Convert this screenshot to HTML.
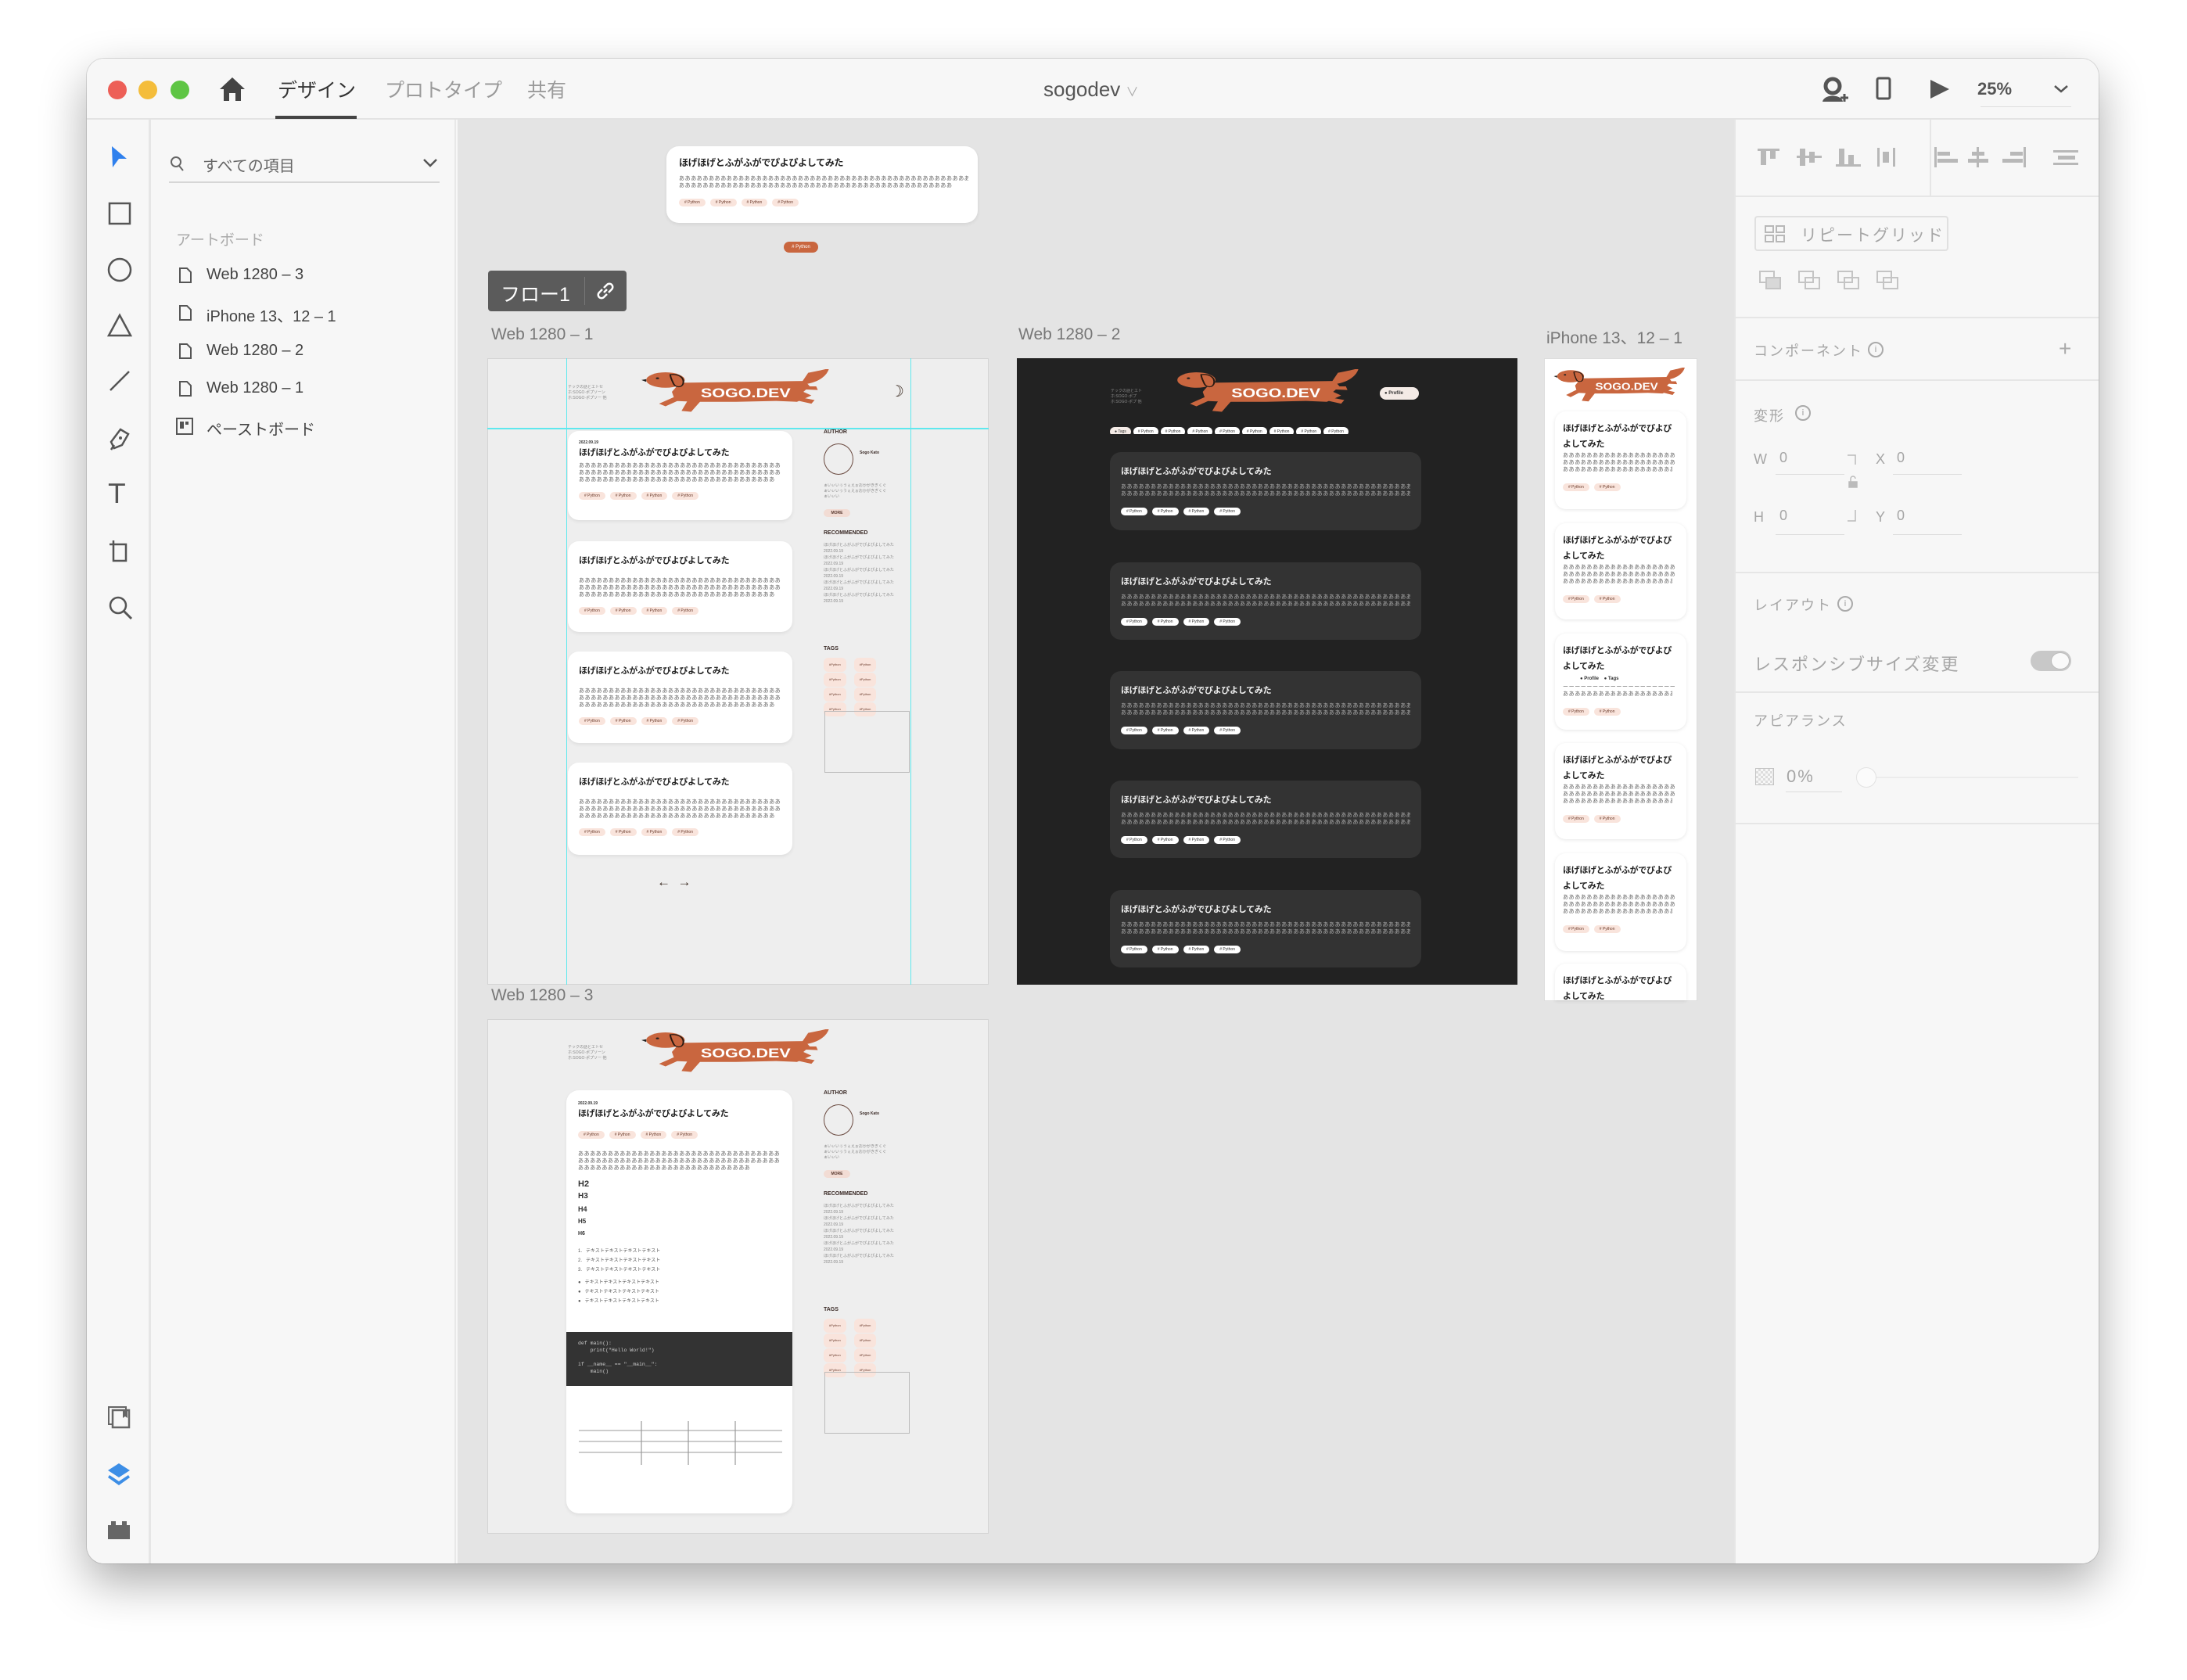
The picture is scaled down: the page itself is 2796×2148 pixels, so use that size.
<!DOCTYPE html>
<html><head><meta charset="utf-8">
<style>
*{box-sizing:border-box;margin:0;padding:0}
body{width:2796px;height:2148px;background:#fff;position:relative;overflow:hidden;font-family:"Liberation Sans","Noto Sans CJK JP",sans-serif}
.a{position:absolute}
#win{left:111px;top:75px;width:2572px;height:1924px;border-radius:22px;background:#f7f7f7;box-shadow:0 24px 60px rgba(0,0,0,.33),0 0 0 1px rgba(0,0,0,.12);overflow:hidden}
.tl{width:24px;height:24px;border-radius:50%;top:103px}
.tab{top:96px;font-size:25px;color:#9a9a9a}
.lay{font-size:20px;color:#444}
.pl{font-size:18px;color:#a6a6a6;letter-spacing:2px}
.div{height:2px;background:#e6e6e6;left:2217px;width:466px}
.ab{position:absolute;overflow:hidden}
.card{position:absolute;background:#fff;border-radius:14px;box-shadow:0 2px 5px rgba(0,0,0,.07);padding:12px 14px;overflow:hidden}
.dt{font-size:5px;font-weight:bold;color:#333;height:7px}
.tt{font-size:11px;font-weight:bold;color:#222;white-space:nowrap;letter-spacing:-.3px}
.ln{font-size:7px;line-height:9px;color:#666;white-space:nowrap;overflow:hidden;letter-spacing:.6px}
.tg{display:inline-block;background:#f9e4dc;border-radius:6px;font-size:5px;padding:2px 7px;margin-right:6px;color:#6a3a2a}
.dk{background:#333;box-shadow:none}
.dk .tt{color:#eee}.dk .ln{color:#aaa}.dk .tg{background:#fff;color:#333}
.sb{font-size:7px;font-weight:bold;color:#3a2a26}
.sl{font-size:5px;color:#888;white-space:nowrap;overflow:hidden;line-height:7px}
.lbl{font-size:21px;color:#777}
.ip .tt{font-size:11px;white-space:normal;line-height:20px;word-break:break-all}
</style></head><body>
<svg width="0" height="0" style="position:absolute">
<defs>
<symbol id="dog" viewBox="0 0 240 100">
<path d="M210 8 C222 4 232 0 236 -2 C234 12 226 26 210 32 L200 34 Z" fill="#c9663f"/>
<path d="M50 30 L206 26 L212 38 L204 50 L214 58 L204 66 L196 72 L170 70 L120 72 L70 72 L44 70 L40 50 Z" fill="#c9663f"/>
<path d="M60 68 L52 92 L64 94 L76 70 Z M188 66 L214 76 L218 68 L200 62 Z M196 44 L222 46 L220 38 L200 38 Z M42 62 L24 76 L32 82 L52 66 Z" fill="#c9663f"/>
<ellipse cx="32" cy="24" rx="24" ry="17" fill="#c9663f"/>
<path d="M8 22 L2 24 L8 28 Z" fill="#222"/>
<path d="M38 12 C48 10 56 18 54 32 C52 42 44 40 42 32 C40 24 38 18 38 12Z" fill="#c9663f" stroke="#2a1a12" stroke-width="2"/>
<circle cx="22" cy="20" r="2" fill="#222"/>
</symbol>
</defs></svg>

<div id="win" class="a"></div>
<div class="a" style="left:111px;top:75px;width:2572px;height:78px;background:#f7f7f7;border-radius:22px 22px 0 0;border-bottom:2px solid #e3e3e3"></div>
<div class="a tl" style="left:138px;background:#ed5f57"></div>
<div class="a tl" style="left:177px;background:#f4bd3b"></div>
<div class="a tl" style="left:218px;background:#5ec544"></div>
<svg class="a" style="left:280px;top:98px" width="34" height="32" viewBox="0 0 34 32"><path d="M17 1 L33 16 L28 16 L28 31 L21 31 L21 21 L13 21 L13 31 L6 31 L6 16 L1 16 Z" fill="#444"/></svg>
<div class="a tab" style="left:355px;color:#333">デザイン</div>
<div class="a" style="left:352px;top:148px;width:104px;height:4px;background:#444"></div>
<div class="a tab" style="left:492px">プロトタイプ</div>
<div class="a tab" style="left:674px">共有</div>
<div class="a" style="left:1334px;top:99px;font-size:26px;color:#555">sogodev <span style="font-size:16px;color:#aaa">∨</span></div>
<svg class="a" style="left:2328px;top:98px" width="36" height="34" viewBox="0 0 36 34"><circle cx="15" cy="12" r="9" fill="none" stroke="#555" stroke-width="5"/><path d="M2 32 C4 22 26 22 28 32" fill="#555"/><path d="M30 22 V32 M25 27 H35" stroke="#555" stroke-width="3"/></svg>
<svg class="a" style="left:2398px;top:98px" width="20" height="30" viewBox="0 0 20 30"><rect x="2" y="2" width="16" height="26" rx="2" fill="none" stroke="#555" stroke-width="3"/></svg>
<svg class="a" style="left:2466px;top:101px" width="28" height="26" viewBox="0 0 28 26"><path d="M2 1 L26 13 L2 25 Z" fill="#555"/></svg>
<div class="a" style="left:2528px;top:101px;font-size:22px;font-weight:bold;color:#555">25%</div>
<div class="a" style="left:2532px;top:136px;width:116px;height:1px;background:#ddd"></div>
<svg class="a" style="left:2625px;top:108px" width="20" height="12" viewBox="0 0 20 12"><path d="M2 2 L10 9 L18 2" fill="none" stroke="#555" stroke-width="2.5"/></svg>

<div class="a" style="left:111px;top:153px;width:82px;height:1846px;background:#f7f7f7;border-right:3px solid #e6e6e6;border-radius:0 0 0 22px"></div>
<svg class="a" style="left:140px;top:186px" width="24" height="30" viewBox="0 0 24 30"><path d="M3 1 L22 17 L12 17 L4 28 Z" fill="#2f80ed"/></svg>
<svg class="a" style="left:137px;top:257px" width="32" height="32"><rect x="3" y="3" width="26" height="26" fill="none" stroke="#555" stroke-width="2.5"/></svg>
<svg class="a" style="left:136px;top:328px" width="34" height="34"><circle cx="17" cy="17" r="14" fill="none" stroke="#555" stroke-width="2.5"/></svg>
<svg class="a" style="left:136px;top:400px" width="34" height="32"><path d="M17 3 L31 29 L3 29 Z" fill="none" stroke="#555" stroke-width="2.5"/></svg>
<svg class="a" style="left:138px;top:472px" width="30" height="30"><path d="M27 3 L3 27" stroke="#555" stroke-width="2.5"/></svg>
<svg class="a" style="left:138px;top:545px" width="30" height="32" viewBox="0 0 30 32"><path d="M8 28 L4 20 L16 4 L26 10 L18 24 Z M4 30 L8 24" fill="none" stroke="#555" stroke-width="2.5"/><circle cx="16" cy="15" r="2" fill="#555"/></svg>
<div class="a" style="left:139px;top:612px;font-size:34px;font-family:'DejaVu Sans';color:#555">T</div>
<svg class="a" style="left:137px;top:688px" width="32" height="32"><path d="M8 3 V8 H3 M8 8 H24 V29 H8 V8" fill="none" stroke="#555" stroke-width="2.5"/></svg>
<svg class="a" style="left:137px;top:760px" width="34" height="34"><circle cx="14" cy="14" r="10" fill="none" stroke="#555" stroke-width="2.5"/><path d="M21 21 L31 31" stroke="#555" stroke-width="3"/></svg>
<svg class="a" style="left:136px;top:1796px" width="32" height="32"><rect x="3" y="3" width="22" height="22" fill="none" stroke="#666" stroke-width="2"/><rect x="8" y="7" width="21" height="22" fill="#f7f7f7" stroke="#666" stroke-width="2.5"/><path d="M21 7 V17 L24 15 L27 17 V7Z" fill="#666"/></svg>
<svg class="a" style="left:136px;top:1869px" width="32" height="32"><path d="M16 2 L30 11 L16 20 L2 11 Z" fill="#3d8ee6"/><path d="M4 17 L16 25 L28 17 L30 20 L16 30 L2 20 Z" fill="#3d8ee6"/></svg>
<svg class="a" style="left:136px;top:1942px" width="32" height="28"><path d="M2 8 H6 V3 H12 V8 H20 V3 H26 V8 H30 V26 H2 Z" fill="#666"/></svg>

<div class="a" style="left:196px;top:153px;width:387px;height:1846px;background:#f7f7f7;border-right:2px solid #e8e8e8"></div>
<svg class="a" style="left:217px;top:199px" width="20" height="22"><circle cx="8" cy="8" r="6" fill="none" stroke="#666" stroke-width="2"/><path d="M12 13 L17 19" stroke="#666" stroke-width="2"/></svg>
<div class="a" style="left:259px;top:196px;font-size:20px;color:#666">すべての項目</div>
<svg class="a" style="left:540px;top:202px" width="20" height="14"><path d="M2 2 L10 10 L18 2" fill="none" stroke="#555" stroke-width="2.5"/></svg>
<div class="a" style="left:216px;top:232px;width:346px;height:2px;background:#d6d6d6"></div>
<div class="a" style="left:225px;top:292px;font-size:19px;color:#aaa">アートボード</div>
<svg class="a" style="left:228px;top:341px" width="18" height="22"><path d="M2 2 H11 L16 7 V20 H2 Z" fill="none" stroke="#555" stroke-width="2"/></svg>
<div class="a lay" style="left:264px;top:340px">Web 1280 – 3</div>
<svg class="a" style="left:228px;top:389px" width="18" height="22"><path d="M2 2 H11 L16 7 V20 H2 Z" fill="none" stroke="#555" stroke-width="2"/></svg>
<div class="a lay" style="left:264px;top:388px">iPhone 13、12 – 1</div>
<svg class="a" style="left:228px;top:438px" width="18" height="22"><path d="M2 2 H11 L16 7 V20 H2 Z" fill="none" stroke="#555" stroke-width="2"/></svg>
<div class="a lay" style="left:264px;top:437px">Web 1280 – 2</div>
<svg class="a" style="left:228px;top:486px" width="18" height="22"><path d="M2 2 H11 L16 7 V20 H2 Z" fill="none" stroke="#555" stroke-width="2"/></svg>
<div class="a lay" style="left:264px;top:485px">Web 1280 – 1</div>
<svg class="a" style="left:224px;top:533px" width="24" height="24"><rect x="2" y="2" width="20" height="20" fill="none" stroke="#555" stroke-width="2"/><rect x="6" y="6" width="5" height="9" fill="#555"/><rect x="13" y="6" width="4" height="4" fill="#555"/></svg>
<div class="a lay" style="left:264px;top:533px">ペーストボード</div>

<div class="a" style="left:585px;top:153px;width:1632px;height:1846px;background:#e4e4e4"></div>

<div class="card" style="left:852px;top:187px;width:398px;height:98px;padding:12px 16px;border-radius:16px">
<div class="tt" style="font-size:12px">ほげほげとふがふがでぴよぴよしてみた</div>
<div class="ln" style="margin-top:8px;width:370px">ああああああああああああああああああああああああああああああああああああああああああああああああああああ</div>
<div class="ln" style="width:350px">ああああああああああああああああああああああああああああああああああああああああああああああああああああ</div>
<div style="margin-top:5px"><span class="tg"># Python</span><span class="tg"># Python</span><span class="tg"># Python</span><span class="tg"># Python</span></div>
</div>
<div class="a" style="left:1002px;top:309px;width:44px;height:14px;border-radius:7px;background:#c9663f;font-size:6px;color:#fff;text-align:center;line-height:14px"># Python</div>

<div class="a" style="left:624px;top:346px;width:177px;height:52px;background:#5b5b5b;border-radius:4px"></div>
<div class="a" style="left:640px;top:357px;font-size:25px;color:#fff">フロー1</div>
<div class="a" style="left:747px;top:354px;width:1px;height:36px;background:#777"></div>
<svg class="a" style="left:760px;top:358px" width="28" height="28" viewBox="0 0 28 28"><path d="M12 16 L16 12 M10 12 L6 16 A4 4 0 0 0 12 22 L16 18 M18 16 L22 12 A4 4 0 0 0 16 6 L12 10" fill="none" stroke="#fff" stroke-width="2.5"/></svg>

<div class="a lbl" style="left:628px;top:416px">Web 1280 – 1</div>
<div class="a lbl" style="left:1302px;top:416px">Web 1280 – 2</div>
<div class="a lbl" style="left:1977px;top:416px">iPhone 13、12 – 1</div>
<div class="a lbl" style="left:628px;top:1261px">Web 1280 – 3</div>

<!-- Artboard 1 -->
<div class="ab" style="left:623px;top:458px;width:641px;height:801px;background:#eeeeee;border:1px solid #d4d4d4"></div>
<div class="a sl" style="left:726px;top:492px;width:50px">テックの話とエトセ<br>ホ:SOGO·ポプソーン<br>ホ:SOGO·ポプソー 他社</div>
<svg class="a" style="left:818px;top:472px" width="246" height="58" viewBox="0 0 240 100" preserveAspectRatio="none"><use href="#dog"/><text x="132" y="62" font-size="28" font-weight="bold" fill="#fff" text-anchor="middle" textLength="112" lengthAdjust="spacingAndGlyphs" font-family="Liberation Sans">SOGO.DEV</text></svg>
<div class="a" style="left:1138px;top:488px;font-size:20px;color:#3a2a20">☽</div>
<div class="card" style="left:726px;top:551px;width:287px;height:114px">
<div class="dt">2022.09.19</div><div class="tt">ほげほげとふがふがでぴよぴよしてみた</div>
<div class="ln" style="margin-top:5px">ああああああああああああああああああああああああああああああああああああ</div><div class="ln">ああああああああああああああああああああああああああああああああああああ</div><div class="ln" style="width:250px">ああああああああああああああああああああああああああああああああああああ</div>
<div style="margin-top:4px"><span class="tg"># Python</span><span class="tg"># Python</span><span class="tg"># Python</span><span class="tg"># Python</span></div></div>
<div class="card" style="left:726px;top:692px;width:287px;height:116px;padding-top:16px">
<div class="tt">ほげほげとふがふがでぴよぴよしてみた</div>
<div class="ln" style="margin-top:14px">ああああああああああああああああああああああああああああああああああああ</div><div class="ln">ああああああああああああああああああああああああああああああああああああ</div><div class="ln" style="width:250px">ああああああああああああああああああああああああああああああああああああ</div>
<div style="margin-top:4px"><span class="tg"># Python</span><span class="tg"># Python</span><span class="tg"># Python</span><span class="tg"># Python</span></div></div>
<div class="card" style="left:726px;top:833px;width:287px;height:117px;padding-top:16px">
<div class="tt">ほげほげとふがふがでぴよぴよしてみた</div>
<div class="ln" style="margin-top:14px">ああああああああああああああああああああああああああああああああああああ</div><div class="ln">ああああああああああああああああああああああああああああああああああああ</div><div class="ln" style="width:250px">ああああああああああああああああああああああああああああああああああああ</div>
<div style="margin-top:4px"><span class="tg"># Python</span><span class="tg"># Python</span><span class="tg"># Python</span><span class="tg"># Python</span></div></div>
<div class="card" style="left:726px;top:975px;width:287px;height:118px;padding-top:16px">
<div class="tt">ほげほげとふがふがでぴよぴよしてみた</div>
<div class="ln" style="margin-top:14px">ああああああああああああああああああああああああああああああああああああ</div><div class="ln">ああああああああああああああああああああああああああああああああああああ</div><div class="ln" style="width:250px">ああああああああああああああああああああああああああああああああああああ</div>
<div style="margin-top:4px"><span class="tg"># Python</span><span class="tg"># Python</span><span class="tg"># Python</span><span class="tg"># Python</span></div></div>
<div class="a" style="left:840px;top:1118px;font-size:17px;font-weight:bold;color:#3a2a20">←&nbsp;&nbsp;→</div>
<div class="a sb" style="left:1053px;top:549px">AUTHOR</div>
<div class="a" style="left:1053px;top:567px;width:38px;height:40px;border-radius:50%;border:1.5px solid #6a4a40"></div>
<div class="a sb" style="left:1099px;top:576px;font-size:5px">Sogo Kato</div>
<div class="a sl" style="left:1053px;top:618px;width:108px">ぁいぃいぅうぇえぉおかがきぎくぐ<br>ぁいぃいぅうぇえぉおかがきぎくぐ<br>ぁいぃい</div>
<div class="a" style="left:1053px;top:651px;width:34px;height:10px;border-radius:5px;background:#f2dcd4;font-size:5px;font-weight:bold;text-align:center;line-height:10px;color:#5a3a30">MORE</div>
<div class="a sb" style="left:1053px;top:678px">RECOMMENDED</div>
<div class="a sl" style="left:1053px;top:693px;width:108px;line-height:8px">ほげほげとふがふがでぴよぴよしてみた<br>2022.09.19<br>ほげほげとふがふがでぴよぴよしてみた<br>2022.09.19<br>ほげほげとふがふがでぴよぴよしてみた<br>2022.09.19<br>ほげほげとふがふがでぴよぴよしてみた<br>2022.09.19<br>ほげほげとふがふがでぴよぴよしてみた<br>2022.09.19</div>
<div class="a sb" style="left:1053px;top:826px">TAGS</div>
<div class="a" style="left:1053px;top:840px;width:100px;line-height:14px"><span class="tg" style="font-size:4px;margin-right:10px">#Python</span><span class="tg" style="font-size:4px">#Python</span><br><span class="tg" style="font-size:4px;margin-right:10px">#Python</span><span class="tg" style="font-size:4px">#Python</span><br><span class="tg" style="font-size:4px;margin-right:10px">#Python</span><span class="tg" style="font-size:4px">#Python</span><br><span class="tg" style="font-size:4px;margin-right:10px">#Python</span><span class="tg" style="font-size:4px">#Python</span></div>
<div class="a" style="left:1054px;top:909px;width:109px;height:79px;border:1px solid #bbb"></div>
<div class="a" style="left:724px;top:458px;width:1px;height:801px;background:#5fe8ee"></div>
<div class="a" style="left:1164px;top:458px;width:1px;height:801px;background:#5fe8ee"></div>
<div class="a" style="left:623px;top:547px;width:641px;height:2px;background:#5fe8ee"></div>

<!-- Artboard 2 dark -->
<div class="ab" style="left:1300px;top:458px;width:640px;height:801px;background:#222"></div>
<div class="a sl" style="left:1420px;top:497px;width:40px;color:#888">テックの話とエトセ<br>ホ:SOGO·ポプ<br>ホ:SOGO·ポプ 他社</div>
<svg class="a" style="left:1497px;top:472px" width="244" height="58" viewBox="0 0 240 100" preserveAspectRatio="none"><use href="#dog"/><text x="132" y="62" font-size="28" font-weight="bold" fill="#fff" text-anchor="middle" textLength="112" lengthAdjust="spacingAndGlyphs" font-family="Liberation Sans">SOGO.DEV</text></svg>
<div class="a" style="left:1764px;top:495px;width:50px;height:16px;border-radius:8px;background:#f4ebe6;font-size:6px;font-weight:bold;line-height:16px;padding-left:6px;color:#333">● Profile</div>
<div class="a" style="left:1419px;top:540px;width:396px;height:15px;white-space:nowrap;overflow:hidden"><span class="tg" style="background:#f4ebe6;color:#333;border-radius:8px;margin-right:3px;padding:3px 6px">● Tags</span><span class="tg" style="background:#fff;color:#333;margin-right:3px;padding:3px 6px"># Python</span><span class="tg" style="background:#fff;color:#333;margin-right:3px;padding:3px 6px"># Python</span><span class="tg" style="background:#fff;color:#333;margin-right:3px;padding:3px 6px"># Python</span><span class="tg" style="background:#fff;color:#333;margin-right:3px;padding:3px 6px"># Python</span><span class="tg" style="background:#fff;color:#333;margin-right:3px;padding:3px 6px"># Python</span><span class="tg" style="background:#fff;color:#333;margin-right:3px;padding:3px 6px"># Python</span><span class="tg" style="background:#fff;color:#333;margin-right:3px;padding:3px 6px"># Python</span><span class="tg" style="background:#fff;color:#333;padding:3px 6px"># Python</span></div>
<div class="card dk" style="left:1419px;top:578px;width:398px;height:100px;padding:16px 14px">
<div class="tt">ほげほげとふがふがでぴよぴよしてみた</div>
<div class="ln" style="margin-top:8px">あああああああああああああああああああああああああああああああああああああああああああああああああああああ</div><div class="ln" style="width:370px">あああああああああああああああああああああああああああああああああああああああああああああああああああああ</div>
<div style="margin-top:6px"><span class="tg"># Python</span><span class="tg"># Python</span><span class="tg"># Python</span><span class="tg"># Python</span></div></div>
<div class="card dk" style="left:1419px;top:719px;width:398px;height:99px;padding:16px 14px">
<div class="tt">ほげほげとふがふがでぴよぴよしてみた</div>
<div class="ln" style="margin-top:8px">あああああああああああああああああああああああああああああああああああああああああああああああああああああ</div><div class="ln" style="width:370px">あああああああああああああああああああああああああああああああああああああああああああああああああああああ</div>
<div style="margin-top:6px"><span class="tg"># Python</span><span class="tg"># Python</span><span class="tg"># Python</span><span class="tg"># Python</span></div></div>
<div class="card dk" style="left:1419px;top:858px;width:398px;height:100px;padding:16px 14px">
<div class="tt">ほげほげとふがふがでぴよぴよしてみた</div>
<div class="ln" style="margin-top:8px">あああああああああああああああああああああああああああああああああああああああああああああああああああああ</div><div class="ln" style="width:370px">あああああああああああああああああああああああああああああああああああああああああああああああああああああ</div>
<div style="margin-top:6px"><span class="tg"># Python</span><span class="tg"># Python</span><span class="tg"># Python</span><span class="tg"># Python</span></div></div>
<div class="card dk" style="left:1419px;top:998px;width:398px;height:99px;padding:16px 14px">
<div class="tt">ほげほげとふがふがでぴよぴよしてみた</div>
<div class="ln" style="margin-top:8px">あああああああああああああああああああああああああああああああああああああああああああああああああああああ</div><div class="ln" style="width:370px">あああああああああああああああああああああああああああああああああああああああああああああああああああああ</div>
<div style="margin-top:6px"><span class="tg"># Python</span><span class="tg"># Python</span><span class="tg"># Python</span><span class="tg"># Python</span></div></div>
<div class="card dk" style="left:1419px;top:1138px;width:398px;height:99px;padding:16px 14px">
<div class="tt">ほげほげとふがふがでぴよぴよしてみた</div>
<div class="ln" style="margin-top:8px">あああああああああああああああああああああああああああああああああああああああああああああああああああああ</div><div class="ln" style="width:370px">あああああああああああああああああああああああああああああああああああああああああああああああああああああ</div>
<div style="margin-top:6px"><span class="tg"># Python</span><span class="tg"># Python</span><span class="tg"># Python</span><span class="tg"># Python</span></div></div>

<!-- iPhone -->
<div class="ab" style="left:1974px;top:458px;width:196px;height:822px;background:#fff;border:1px solid #ddd"></div>
<svg class="a" style="left:1985px;top:470px" width="172" height="46" viewBox="0 0 240 100" preserveAspectRatio="none"><use href="#dog"/><text x="132" y="62" font-size="28" font-weight="bold" fill="#fff" text-anchor="middle" textLength="112" lengthAdjust="spacingAndGlyphs" font-family="Liberation Sans">SOGO.DEV</text></svg>
<div class="card ip" style="left:1988px;top:526px;width:168px;height:125px;padding:12px 10px;box-shadow:0 1px 5px rgba(0,0,0,.1)"><div class="tt">ほげほげとふがふがでぴよぴよしてみた</div><div class="ln">あああああああああああああああああああ</div><div class="ln">あああああああああああああああああああ</div><div class="ln" style="width:140px">あああああああああああああああああああ</div><div style="margin-top:6px"><span class="tg"># Python</span><span class="tg"># Python</span></div></div>
<div class="card ip" style="left:1988px;top:669px;width:168px;height:123px;padding:12px 10px;box-shadow:0 1px 5px rgba(0,0,0,.1)"><div class="tt">ほげほげとふがふがでぴよぴよしてみた</div><div class="ln">あああああああああああああああああああ</div><div class="ln">あああああああああああああああああああ</div><div class="ln" style="width:140px">あああああああああああああああああああ</div><div style="margin-top:6px"><span class="tg"># Python</span><span class="tg"># Python</span></div></div>
<div class="card ip" style="left:1988px;top:810px;width:168px;height:123px;padding:12px 10px;box-shadow:0 1px 5px rgba(0,0,0,.1)"><div class="tt">ほげほげとふがふがでぴよぴよしてみた</div><div style="font-size:6px;font-weight:bold;color:#333;margin-left:22px;line-height:12px">● Profile &nbsp;&nbsp; ● Tags</div><div class="ln">ーーーーーーーーーーーーーーーーーーー</div><div class="ln" style="width:140px">あああああああああああああああああああ</div><div style="margin-top:6px"><span class="tg"># Python</span><span class="tg"># Python</span></div></div>
<div class="card ip" style="left:1988px;top:950px;width:168px;height:123px;padding:12px 10px;box-shadow:0 1px 5px rgba(0,0,0,.1)"><div class="tt">ほげほげとふがふがでぴよぴよしてみた</div><div class="ln">あああああああああああああああああああ</div><div class="ln">あああああああああああああああああああ</div><div class="ln" style="width:140px">あああああああああああああああああああ</div><div style="margin-top:6px"><span class="tg"># Python</span><span class="tg"># Python</span></div></div>
<div class="card ip" style="left:1988px;top:1091px;width:168px;height:125px;padding:12px 10px;box-shadow:0 1px 5px rgba(0,0,0,.1)"><div class="tt">ほげほげとふがふがでぴよぴよしてみた</div><div class="ln">あああああああああああああああああああ</div><div class="ln">あああああああああああああああああああ</div><div class="ln" style="width:140px">あああああああああああああああああああ</div><div style="margin-top:6px"><span class="tg"># Python</span><span class="tg"># Python</span></div></div>
<div class="card ip" style="left:1988px;top:1232px;width:168px;height:47px;padding:12px 10px;border-radius:14px 14px 0 0;box-shadow:0 1px 5px rgba(0,0,0,.1)"><div class="tt">ほげほげとふがふがでぴよぴよしてみた</div></div>

<!-- Artboard 3 -->
<div class="ab" style="left:623px;top:1303px;width:641px;height:658px;background:#eeeeee;border:1px solid #d4d4d4"></div>
<div class="a sl" style="left:726px;top:1336px;width:50px">テックの話とエトセ<br>ホ:SOGO·ポプソーン<br>ホ:SOGO·ポプソー 他社</div>
<svg class="a" style="left:818px;top:1316px" width="246" height="58" viewBox="0 0 240 100" preserveAspectRatio="none"><use href="#dog"/><text x="132" y="62" font-size="28" font-weight="bold" fill="#fff" text-anchor="middle" textLength="112" lengthAdjust="spacingAndGlyphs" font-family="Liberation Sans">SOGO.DEV</text></svg>
<div class="card" style="left:724px;top:1394px;width:289px;height:541px;padding:14px 15px;border-radius:16px">
<div class="dt">2022.09.19</div><div class="tt">ほげほげとふがふがでぴよぴよしてみた</div>
<div style="margin-top:8px"><span class="tg"># Python</span><span class="tg"># Python</span><span class="tg"># Python</span><span class="tg"># Python</span></div>
<div class="ln" style="margin-top:14px">ああああああああああああああああああああああああああああああああああああ</div><div class="ln">ああああああああああああああああああああああああああああああああああああ</div><div class="ln" style="width:220px">ああああああああああああああああああああああああああああああああああああ</div>
<div style="font-weight:bold;color:#333;margin-top:8px;line-height:16px"><div style="font-size:11px">H2</div><div style="font-size:10px">H3</div><div style="font-size:9px">H4</div><div style="font-size:8px">H5</div><div style="font-size:7px">H6</div></div>
<div style="font-size:6px;color:#555;line-height:12px;margin-top:8px;white-space:nowrap">1.&nbsp;&nbsp;&nbsp;テキストテキストテキストテキスト<br>2.&nbsp;&nbsp;&nbsp;テキストテキストテキストテキスト<br>3.&nbsp;&nbsp;&nbsp;テキストテキストテキストテキスト<br><span style="display:block;height:4px"></span>●&nbsp;&nbsp;&nbsp;テキストテキストテキストテキスト<br>●&nbsp;&nbsp;&nbsp;テキストテキストテキストテキスト<br>●&nbsp;&nbsp;&nbsp;テキストテキストテキストテキスト</div>
</div>
<div class="a" style="left:724px;top:1703px;width:289px;height:69px;background:#333;padding:10px 15px;font-family:'Liberation Mono',monospace;font-size:6.5px;color:#ccc;line-height:9px;white-space:pre">def main():
    print("Hello World!")

if __name__ == "__main__":
    main()</div>
<svg class="a" style="left:738px;top:1815px" width="264" height="60"><path d="M2 14 H262 M2 28 H262 M2 42 H262" stroke="#bbb" stroke-width="1.5"/><path d="M82 2 V58 M142 2 V58 M202 2 V58" stroke="#999" stroke-width="1.2"/></svg>
<div class="a sb" style="left:1053px;top:1394px">AUTHOR</div>
<div class="a" style="left:1053px;top:1412px;width:38px;height:40px;border-radius:50%;border:1.5px solid #6a4a40"></div>
<div class="a sb" style="left:1099px;top:1421px;font-size:5px">Sogo Kato</div>
<div class="a sl" style="left:1053px;top:1463px;width:108px">ぁいぃいぅうぇえぉおかがきぎくぐ<br>ぁいぃいぅうぇえぉおかがきぎくぐ<br>ぁいぃい</div>
<div class="a" style="left:1053px;top:1496px;width:34px;height:10px;border-radius:5px;background:#f2dcd4;font-size:5px;font-weight:bold;text-align:center;line-height:10px;color:#5a3a30">MORE</div>
<div class="a sb" style="left:1053px;top:1523px">RECOMMENDED</div>
<div class="a sl" style="left:1053px;top:1538px;width:108px;line-height:8px">ほげほげとふがふがでぴよぴよしてみた<br>2022.09.19<br>ほげほげとふがふがでぴよぴよしてみた<br>2022.09.19<br>ほげほげとふがふがでぴよぴよしてみた<br>2022.09.19<br>ほげほげとふがふがでぴよぴよしてみた<br>2022.09.19<br>ほげほげとふがふがでぴよぴよしてみた<br>2022.09.19</div>
<div class="a sb" style="left:1053px;top:1671px">TAGS</div>
<div class="a" style="left:1053px;top:1685px;width:100px;line-height:14px"><span class="tg" style="font-size:4px;margin-right:10px">#Python</span><span class="tg" style="font-size:4px">#Python</span><br><span class="tg" style="font-size:4px;margin-right:10px">#Python</span><span class="tg" style="font-size:4px">#Python</span><br><span class="tg" style="font-size:4px;margin-right:10px">#Python</span><span class="tg" style="font-size:4px">#Python</span><br><span class="tg" style="font-size:4px;margin-right:10px">#Python</span><span class="tg" style="font-size:4px">#Python</span></div>
<div class="a" style="left:1054px;top:1754px;width:109px;height:79px;border:1px solid #bbb"></div>

<!-- right panel -->
<div class="a" style="left:2217px;top:153px;width:466px;height:1846px;background:#f7f7f7;border-left:2px solid #e6e6e6;border-radius:0 0 22px 0"></div>
<svg class="a" style="left:2245px;top:186px" width="420" height="30" viewBox="0 0 420 30" fill="#b8b8b8"><rect x="2" y="4" width="28" height="3"/><rect x="6" y="7" width="7" height="18"/><rect x="18" y="7" width="7" height="10"/>
<rect x="52" y="13" width="32" height="3"/><rect x="56" y="4" width="7" height="22"/><rect x="68" y="8" width="7" height="14"/>
<rect x="102" y="24" width="32" height="3"/><rect x="106" y="4" width="7" height="20"/><rect x="118" y="12" width="7" height="12"/>
<rect x="155" y="3" width="3" height="24"/><rect x="175" y="3" width="3" height="24"/><rect x="162" y="8" width="8" height="14"/>
<rect x="228" y="2" width="3" height="26"/><rect x="232" y="8" width="16" height="5"/><rect x="232" y="17" width="26" height="5"/>
<rect x="282" y="2" width="3" height="26"/><rect x="276" y="8" width="16" height="5"/><rect x="271" y="17" width="26" height="5"/>
<rect x="342" y="2" width="3" height="26"/><rect x="325" y="8" width="16" height="5"/><rect x="315" y="17" width="26" height="5"/>
<rect x="380" y="6" width="32" height="3"/><rect x="386" y="13" width="22" height="5"/><rect x="380" y="22" width="32" height="3"/></svg>
<div class="a" style="left:2467px;top:153px;width:2px;height:97px;background:#e6e6e6"></div>
<div class="a div" style="top:250px"></div>
<div class="a" style="left:2243px;top:276px;width:248px;height:45px;border:2px solid #e0e0e0;border-radius:4px"></div>
<svg class="a" style="left:2256px;top:288px" width="26" height="22"><rect x="1" y="1" width="10" height="8" fill="none" stroke="#b8b8b8" stroke-width="2"/><rect x="15" y="1" width="10" height="8" fill="none" stroke="#b8b8b8" stroke-width="2"/><rect x="1" y="13" width="10" height="8" fill="none" stroke="#b8b8b8" stroke-width="2"/><rect x="15" y="13" width="10" height="8" fill="none" stroke="#b8b8b8" stroke-width="2"/></svg>
<div class="a pl" style="left:2302px;top:285px;font-size:21px">リピートグリッド</div>
<svg class="a" style="left:2248px;top:345px" width="190" height="28" fill="none" stroke="#c4c4c4" stroke-width="2"><rect x="2" y="2" width="18" height="14"/><rect x="10" y="10" width="18" height="14" fill="#d8d8d8"/><rect x="52" y="2" width="18" height="14"/><rect x="60" y="10" width="18" height="14"/><rect x="102" y="2" width="18" height="14"/><rect x="110" y="10" width="18" height="14"/><rect x="152" y="2" width="18" height="14"/><rect x="160" y="10" width="18" height="14"/></svg>
<div class="a div" style="top:405px"></div>
<div class="a pl" style="left:2242px;top:435px">コンポーネント</div>
<div class="a" style="left:2388px;top:437px;width:20px;height:20px;border:2px solid #aaa;border-radius:50%;font-size:11px;color:#999;text-align:center;line-height:16px">i</div>
<div class="a" style="left:2632px;top:430px;font-size:28px;color:#aaa">+</div>
<div class="a div" style="top:485px"></div>
<div class="a pl" style="left:2242px;top:518px">変形</div>
<div class="a" style="left:2295px;top:518px;width:20px;height:20px;border:2px solid #aaa;border-radius:50%;font-size:11px;color:#999;text-align:center;line-height:16px">i</div>
<div class="a pl" style="left:2242px;top:577px">W</div><div class="a pl" style="left:2275px;top:575px">0</div>
<div class="a" style="left:2270px;top:606px;width:88px;height:1px;background:#ddd"></div>
<div class="a pl" style="left:2398px;top:577px">X</div><div class="a pl" style="left:2425px;top:575px">0</div>
<div class="a" style="left:2420px;top:606px;width:88px;height:1px;background:#ddd"></div>
<div class="a pl" style="left:2242px;top:651px">H</div><div class="a pl" style="left:2275px;top:649px">0</div>
<div class="a" style="left:2270px;top:683px;width:88px;height:1px;background:#ddd"></div>
<div class="a pl" style="left:2398px;top:651px">Y</div><div class="a pl" style="left:2425px;top:649px">0</div>
<div class="a" style="left:2420px;top:683px;width:88px;height:1px;background:#ddd"></div>
<svg class="a" style="left:2360px;top:580px" width="16" height="96" fill="none" stroke="#bbb" stroke-width="1.5"><path d="M2 2 H12 V14 M12 72 V86 H2"/><rect x="4" y="36" width="10" height="7" fill="#bbb"/><path d="M6 36 V32 A3 3 0 0 1 12 32"/></svg>
<div class="a div" style="top:731px"></div>
<div class="a pl" style="left:2242px;top:760px">レイアウト</div>
<div class="a" style="left:2349px;top:762px;width:20px;height:20px;border:2px solid #aaa;border-radius:50%;font-size:11px;color:#999;text-align:center;line-height:16px">i</div>
<div class="a pl" style="left:2242px;top:832px;font-size:22px">レスポンシブサイズ変更</div>
<div class="a" style="left:2596px;top:832px;width:52px;height:26px;border-radius:13px;background:#c8c8c8"></div>
<div class="a" style="left:2622px;top:834px;width:24px;height:22px;border-radius:50%;background:#fafafa;border:1px solid #bbb"></div>
<div class="a div" style="top:884px"></div>
<div class="a pl" style="left:2242px;top:908px">アピアランス</div>
<div class="a" style="left:2244px;top:982px;width:24px;height:22px;border:1.5px solid #c4c4c4;background:repeating-conic-gradient(#ddd 0 25%,#f7f7f7 0 50%) 0 0/6px 6px"></div>
<div class="a pl" style="left:2284px;top:980px;font-size:22px">0%</div>
<div class="a" style="left:2283px;top:1012px;width:72px;height:1px;background:#ddd"></div>
<div class="a" style="left:2375px;top:993px;width:282px;height:2px;background:#ececec"></div>
<div class="a" style="left:2373px;top:981px;width:26px;height:26px;border-radius:50%;background:#fbfbfb;border:1px solid #e2e2e2"></div>
<div class="a div" style="top:1052px"></div>
</body></html>
